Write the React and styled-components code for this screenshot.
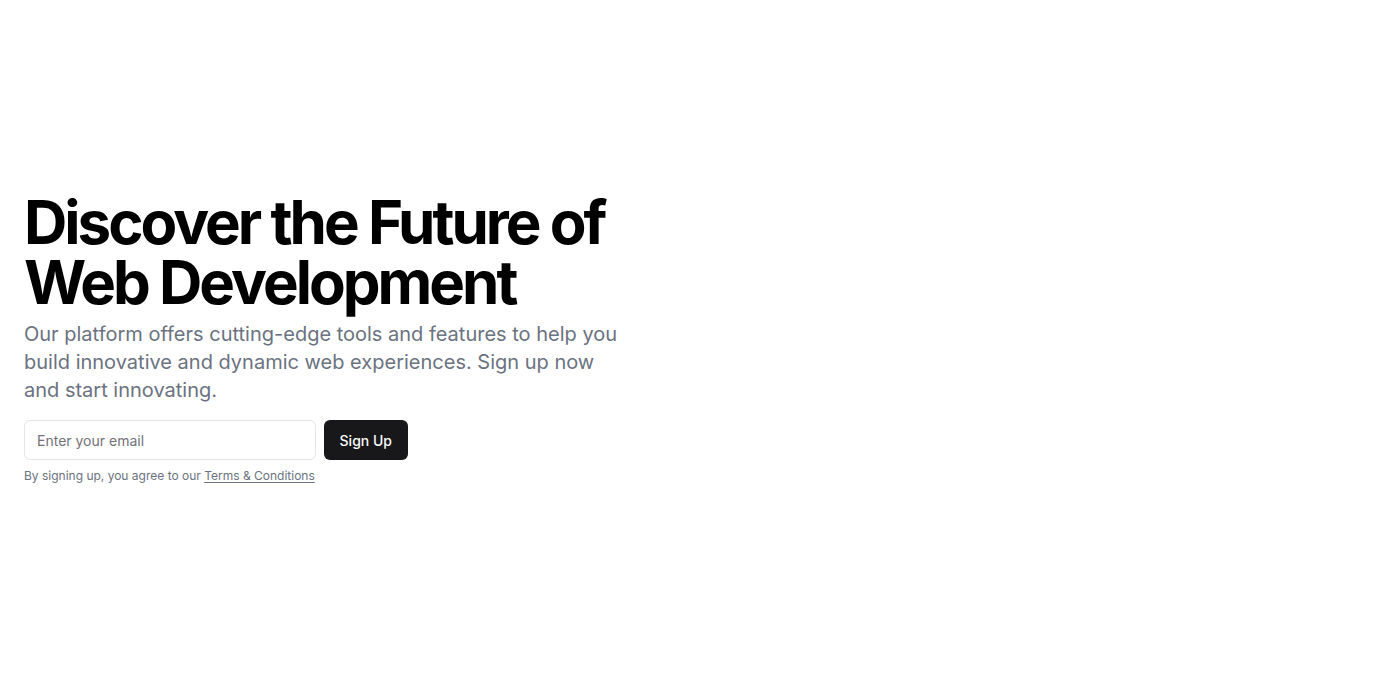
import React from "react";
import styled, { createGlobalStyle } from "styled-components";

const GlobalStyle = createGlobalStyle`
  *, *::before, *::after { box-sizing: border-box; }
  html, body {
    margin: 0;
    padding: 0;
    background: #ffffff;
    font-family: Inter, "Noto Sans", sans-serif;
    -webkit-font-smoothing: antialiased;
  }
`;

const Section = styled.section`
  width: 100%;
  min-height: 676px;
  display: flex;
  align-items: center;
`;

const Container = styled.div`
  width: 100%;
  padding: 0 24px;
  display: grid;
  grid-template-columns: 1fr 600px;
  gap: 48px;
`;

const Copy = styled.div`
  display: flex;
  flex-direction: column;
  justify-content: center;
  gap: 16px;
`;

const Intro = styled.div`
  display: flex;
  flex-direction: column;
  gap: 8px;
`;

const Title = styled.h1`
  margin: 0;
  font-size: 60px;
  line-height: 1;
  font-weight: 700;
  letter-spacing: -0.05em;
  color: #000;
`;

const Lead = styled.p`
  margin: 0;
  max-width: 600px;
  font-size: 20px;
  line-height: 28px;
  color: #6b7280;
`;

const Signup = styled.div`
  display: flex;
  flex-direction: column;
  gap: 8px;
  width: 100%;
  max-width: 384px;
`;

const Form = styled.form`
  display: flex;
  gap: 8px;
`;

const EmailInput = styled.input`
  flex: 1;
  min-width: 0;
  height: 40px;
  padding: 8px 12px;
  border: 1px solid #e4e4e7;
  border-radius: 6px;
  background: #fff;
  font-family: inherit;
  font-size: 14px;
  color: #09090b;
  outline: none;

  &::placeholder {
    color: #71717a;
  }
`;

const Button = styled.button`
  height: 40px;
  padding: 0 16px;
  border: none;
  border-radius: 6px;
  background: #18181b;
  color: #fafafa;
  font-family: inherit;
  font-size: 14px;
  font-weight: 500;
  cursor: pointer;
`;

const Note = styled.p`
  margin: 0;
  font-size: 12px;
  line-height: 16px;
  color: #6b7280;

  a {
    color: inherit;
    text-decoration: underline;
    text-underline-offset: 2px;
  }
`;

const App = () => (
  <>
    <GlobalStyle />
    <Section>
      <Container>
        <Copy>
          <Intro>
            <Title>Discover the Future of Web Development</Title>
            <Lead>
              Our platform offers cutting-edge tools and features to help you
              build innovative and dynamic web experiences. Sign up now and
              start innovating.
            </Lead>
          </Intro>
          <Signup>
            <Form onSubmit={(e) => e.preventDefault()}>
              <EmailInput type="email" placeholder="Enter your email" />
              <Button type="submit">Sign Up</Button>
            </Form>
            <Note>
              By signing up, you agree to our <a href="#">Terms &amp; Conditions</a>
            </Note>
          </Signup>
        </Copy>
        <div />
      </Container>
    </Section>
  </>
);

export default App;
